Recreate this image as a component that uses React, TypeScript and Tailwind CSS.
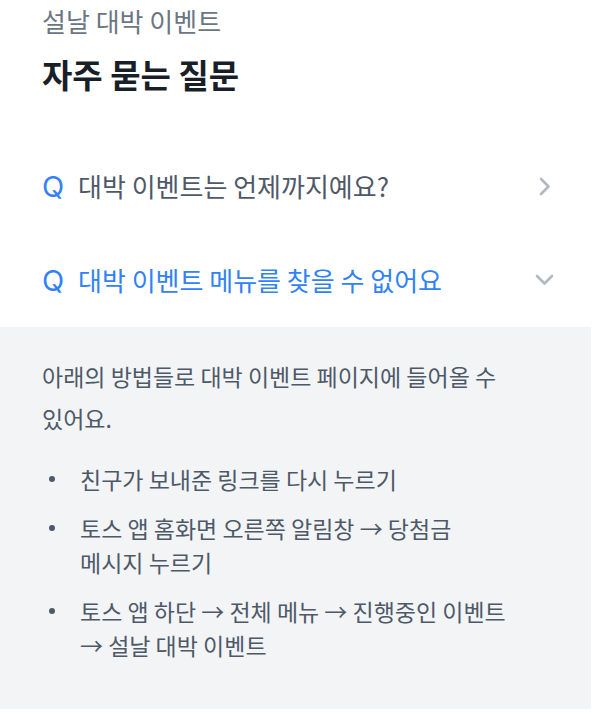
const FONT = "font-['Noto_Sans_CJK_KR','Noto_Sans',sans-serif]";

function ChevronRight() {
  return (
    <svg width="12" height="19" viewBox="0 0 12 19" fill="none">
      <path
        d="M2 2l7.5 7.5L2 17"
        stroke="#b0b8c1"
        strokeWidth="2.6"
        strokeLinecap="round"
        strokeLinejoin="round"
      />
    </svg>
  );
}

function ChevronDown() {
  return (
    <svg width="19" height="12" viewBox="0 0 19 12" fill="none">
      <path
        d="M2 2l7.5 7.5L17 2"
        stroke="#b0b8c1"
        strokeWidth="2.6"
        strokeLinecap="round"
        strokeLinejoin="round"
      />
    </svg>
  );
}

function QuestionRow({
  text,
  open,
}: {
  text: string;
  open?: boolean;
}) {
  return (
    <div className="flex h-[94px] items-center pl-[42px] pr-[37px]">
      <span className="w-[36px] font-['Inter',sans-serif] text-[29px] leading-none font-normal text-[#3182f6]">
        Q
      </span>
      <span
        className={`flex-1 text-[26px] leading-[36px] ${
          open ? "text-[#3182f6]" : "text-[#4e5968]"
        }`}
      >
        {text}
      </span>
      <span className="flex w-[19px] justify-center">
        {open ? <ChevronDown /> : <ChevronRight />}
      </span>
    </div>
  );
}

const steps = [
  ["친구가 보내준 링크를 다시 누르기"],
  ["토스 앱 홈화면 오른쪽 알림창 → 당첨금", "메시지 누르기"],
  ["토스 앱 하단 → 전체 메뉴 → 진행중인 이벤트", "→ 설날 대박 이벤트"],
];

export default function App() {
  return (
    <div className={`w-[591px] bg-white ${FONT}`}>
      <header className="pt-[3px] pl-[42px]">
        <p className="text-[26px] leading-[36px] text-[#6b7684]">설날 대박 이벤트</p>
        <h1 className="mt-[15px] text-[33px] leading-[40px] font-bold text-[#191f28]">
          자주 묻는 질문
        </h1>
      </header>

      <div className="mt-[45px]">
        <QuestionRow text="대박 이벤트는 언제까지예요?" />
        <QuestionRow text="대박 이벤트 메뉴를 찾을 수 없어요" open />
      </div>

      <div className="bg-[#f2f4f6] px-[42px] pt-[28px] pb-[47px] text-[23px] text-[#4e5968]">
        <p className="leading-[42px]">
          아래의 방법들로 대박 이벤트 페이지에 들어올 수
          <br />
          있어요.
        </p>
        <ul className="mt-[23px] flex flex-col gap-[15px]">
          {steps.map((lines, i) => (
            <li key={i} className="flex leading-[34px]">
              <span className="flex h-[34px] w-[38px] shrink-0 items-center pl-[7px]">
                <span className="h-[6px] w-[6px] rounded-full bg-[#4e5968]" />
              </span>
              <span>
                {lines.map((line, j) => (
                  <span key={j} className="block whitespace-nowrap">
                    {line}
                  </span>
                ))}
              </span>
            </li>
          ))}
        </ul>
      </div>
    </div>
  );
}
